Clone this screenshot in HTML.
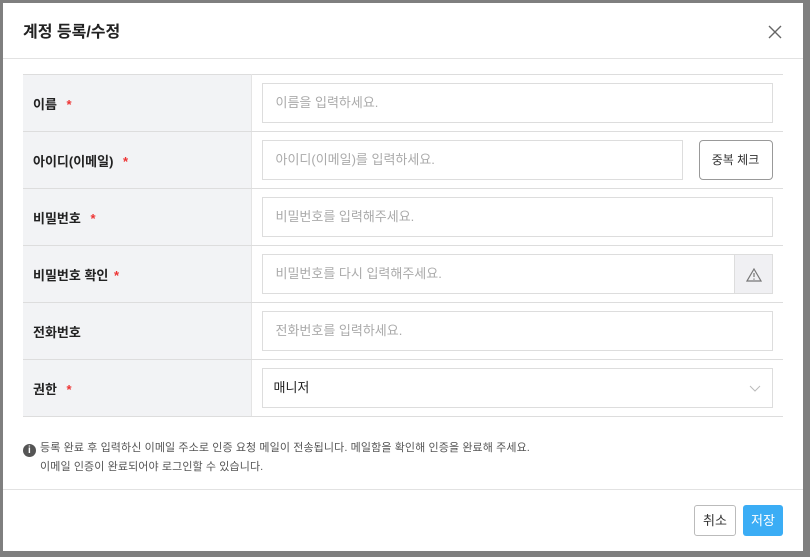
<!DOCTYPE html>
<html><head><meta charset="utf-8"><style>
*{box-sizing:border-box;margin:0;padding:0}
body{width:810px;height:557px;background:#7f7f7f;font-family:"Liberation Sans","Noto Sans CJK KR",sans-serif;position:relative;overflow:hidden}
.modal{position:absolute;left:3px;top:3px;width:800px;height:548px;background:#fff}
.title{position:absolute;left:20px;top:15px;font-size:16px;font-weight:bold;color:#222}
.close{position:absolute;left:765px;top:22px}
.hline{position:absolute;left:0;width:800px;height:1px;background:#e2e2e2}
table{position:absolute;left:20px;top:71px;width:760px;border-collapse:collapse;border-top:1px solid #ddd}
td{border-bottom:1px solid #ddd;height:57px;vertical-align:middle}
td.l{width:228px;background:#f2f3f5;padding-left:10px;font-size:13px;font-weight:bold;color:#222;border-right:1px solid #e4e4e4}
.star{color:#e33;margin-left:6px}
td.r{padding:0 10px}
.inp{height:40px;border:1px solid #ddd;font-size:13px;color:#aaa;padding-left:13px;line-height:38px;position:relative}
.btn{position:absolute;border:1px solid #999;border-radius:4px;font-size:12px;color:#333;text-align:center}
.info{position:absolute;left:20px;top:436px;font-size:11px;color:#555;line-height:19px;letter-spacing:0.1px}
</style></head><body>
<div class="modal">
<div class="title">계정 등록/수정</div>
<svg class="close" width="14" height="14" viewBox="0 0 14 14"><path d="M1 1L13 13M13 1L1 13" stroke="#666" stroke-width="1.4"/></svg>
<div class="hline" style="top:55px"></div>
<table>
<tr><td class="l">이름 <span class="star">*</span></td><td class="r"><div class="inp">이름을 입력하세요.</div></td></tr>
<tr><td class="l">아이디(이메일) <span class="star">*</span></td><td class="r"><div style="position:relative"><div class="inp" style="width:421px">아이디(이메일)를 입력하세요.</div><div class="btn" style="left:437px;top:0;width:74px;height:40px;line-height:38px">중복 체크</div></div></td></tr>
<tr><td class="l">비밀번호 <span class="star">*</span></td><td class="r"><div class="inp">비밀번호를 입력해주세요.</div></td></tr>
<tr><td class="l">비밀번호 확인 <span class="star" style="margin-left:2px">*</span></td><td class="r"><div class="inp">비밀번호를 다시 입력해주세요.<div style="position:absolute;right:-1px;top:-1px;width:39px;height:40px;background:#f0f0f3;border:1px solid #ddd"><svg width="16" height="14" viewBox="0 0 16 14" style="position:absolute;left:11px;top:13px"><path d="M8 1L15 13H1Z" fill="none" stroke="#777" stroke-width="1.2"/><path d="M8 5V9M8 10.5V11.8" stroke="#777" stroke-width="1.2"/></svg></div></div></td></tr>
<tr><td class="l">전화번호</td><td class="r"><div class="inp">전화번호를 입력하세요.</div></td></tr>
<tr><td class="l">권한 <span class="star">*</span></td><td class="r"><div class="inp" style="color:#222;padding-left:11px">매니저<svg width="12" height="8" viewBox="0 0 12 8" style="position:absolute;right:11px;top:16px"><path d="M1 1L6 6L11 1" fill="none" stroke="#bbb" stroke-width="1"/></svg></div></td></tr>
</table>
<div class="info"><span style="display:inline-block;width:13px;height:13px;border-radius:50%;background:#555;color:#fff;font-size:10px;line-height:13px;text-align:center;font-weight:bold;margin-right:4px;vertical-align:-2px">i</span>등록 완료 후 입력하신 이메일 주소로 인증 요청 메일이 전송됩니다. 메일함을 확인해 인증을 완료해 주세요.<br><span style="padding-left:17px">이메일 인증이 완료되어야 로그인할 수 있습니다.</span></div>
<div class="hline" style="top:486px"></div>
<div class="btn" style="left:691px;top:502px;width:42px;height:31px;line-height:29px;border-color:#bbb;border-radius:3px;font-size:13px">취소</div>
<div class="btn" style="left:740px;top:502px;width:40px;height:31px;line-height:31px;border:none;background:#3badf5;color:#fff;border-radius:3px;font-size:13px">저장</div>
</div>
</body></html>
